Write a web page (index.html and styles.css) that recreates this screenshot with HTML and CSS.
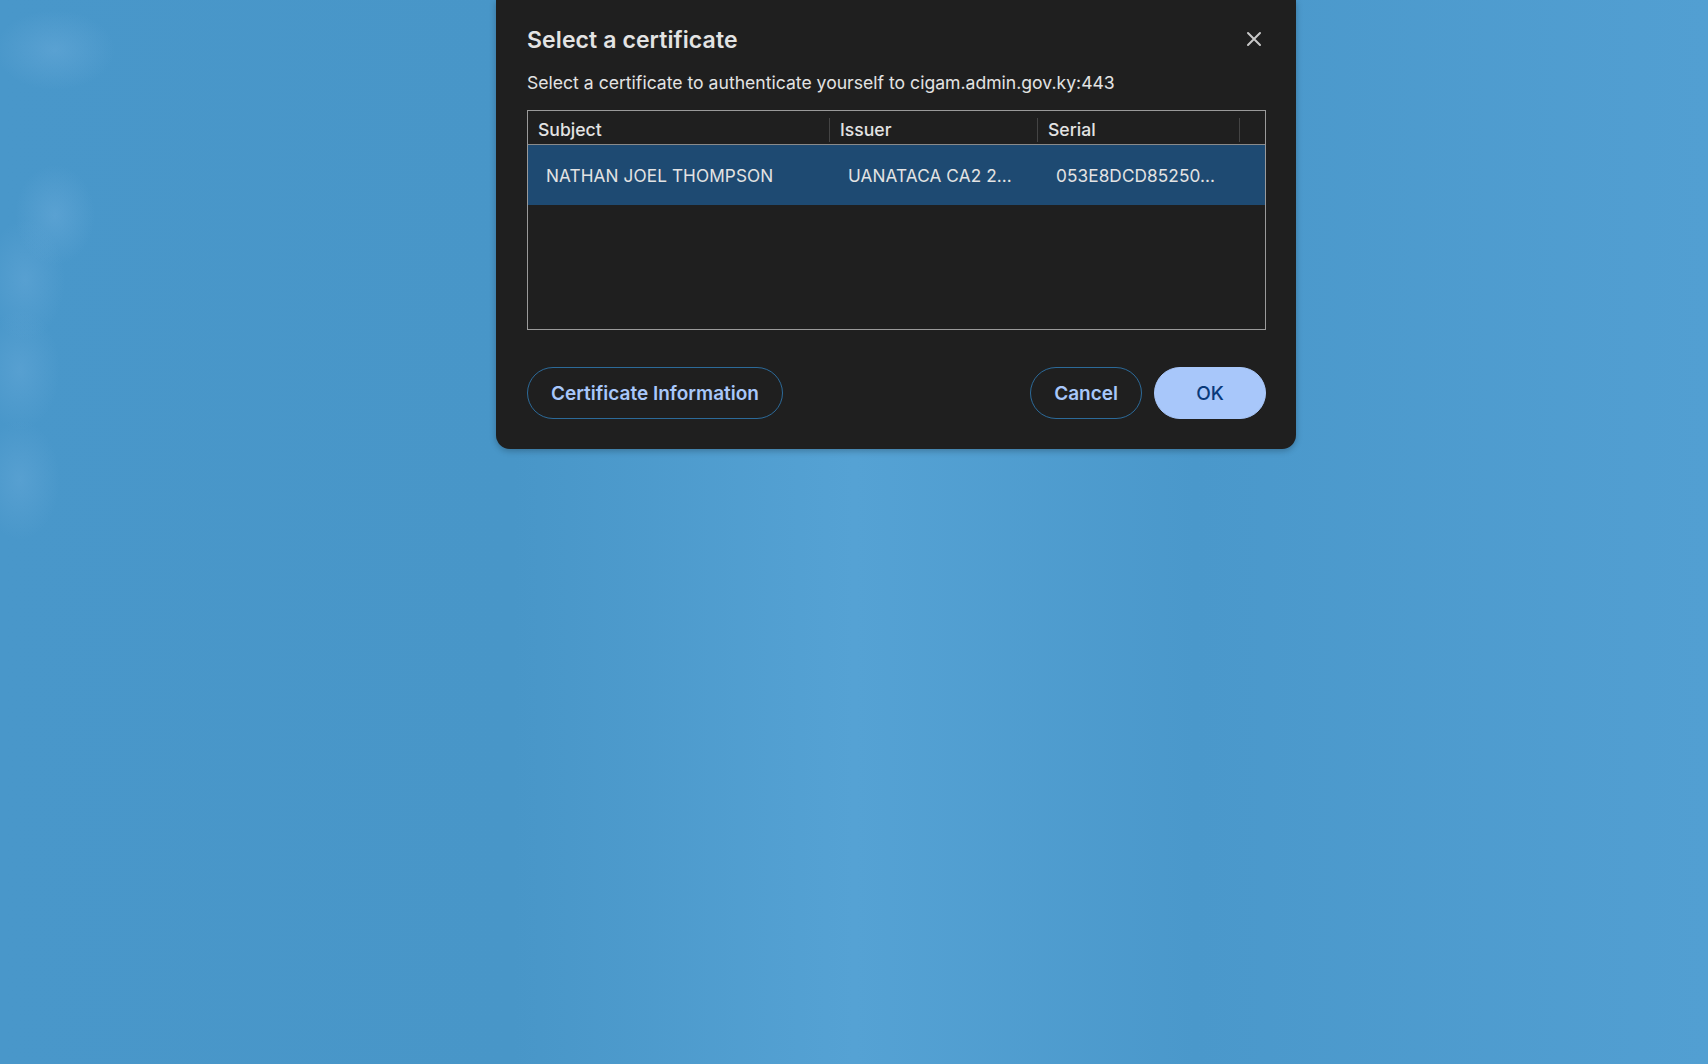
FILE: index.html
```html
<!DOCTYPE html>
<html lang="en">
<head>
	<meta charset="UTF-8">
	<title>Select a certificate</title>
	<link rel="stylesheet" href="styles.css">
</head>
<body>
	<div class="desk">
		<div class="dialog">
			<div class="head">
				<h1>Select a certificate</h1>
				<span class="close">
					<svg width="16" height="16" viewBox="0 0 16 16"><path d="M2 2 L14 14 M14 2 L2 14" stroke="#c8c8c8" stroke-width="2" stroke-linecap="round"/></svg>
				</span>
			</div>
			<p class="sub">Select a certificate to authenticate yourself to cigam.admin.gov.ky:443</p>
			<div class="table">
				<div class="thead">
					<div class="th c1">Subject</div>
					<div class="th c2">Issuer</div>
					<div class="th c3">Serial</div>
					<div class="th c4"></div>
				</div>
				<div class="row sel">
					<div class="td c1">NATHAN JOEL THOMPSON</div>
					<div class="td c2">UANATACA CA2 2...</div>
					<div class="td c3">053E8DCD85250...</div>
				</div>
			</div>
			<div class="actions">
				<button class="btn">Certificate Information</button>
				<div class="right">
					<button class="btn">Cancel</button>
					<button class="btn ok">OK</button>
				</div>
			</div>
		</div>
	</div>
</body>
</html>
```

FILE: styles.css
```css
html, body {
	margin: 0;
	height: 100%;
}
body {
	font-family: Inter, "Liberation Sans", sans-serif;
	background:
		radial-gradient(ellipse 60px 40px at 55px 50px, rgba(120,180,225,0.35), transparent),
		radial-gradient(ellipse 40px 50px at 55px 215px, rgba(120,180,225,0.35), transparent),
		radial-gradient(ellipse 40px 60px at 25px 280px, rgba(120,180,225,0.3), transparent),
		radial-gradient(ellipse 40px 60px at 20px 370px, rgba(120,180,225,0.3), transparent),
		radial-gradient(ellipse 40px 60px at 20px 480px, rgba(120,180,225,0.3), transparent),
		linear-gradient(90deg, #4997ca 0%, #4896c8 30%, #55a2d4 50%, #4a98cb 70%, #529fd2 100%);
	overflow: hidden;
}
.desk {
	padding-left: 496px;
}
.dialog {
	width: 800px;
	box-sizing: border-box;
	height: 449px;
	background: #1f1f1f;
	border-radius: 0 0 14px 14px;
	padding: 23px 30px 0 31px;
	color: #e3e3e3;
	box-shadow: 0 2px 6px rgba(0,0,0,0.25);
}
.head {
	display: flex;
	justify-content: space-between;
	align-items: center;
}
h1 {
	margin: 0;
	font-size: 23px;
	font-weight: 600;
	letter-spacing: 0.1px;
	line-height: 34px;
}
.close {
	display: flex;
	margin-right: 4px;
	margin-top: -2px;
}
.sub {
	margin: 15px 0 0;
	font-size: 17.6px;
	line-height: 22px;
}
.table {
	margin-top: 16px;
	border: 1px solid #9a9a9a;
	height: 220px;
	box-sizing: border-box;
}
.thead {
	display: flex;
	height: 34px;
	border-bottom: 1px solid #8a8a8a;
	align-items: center;
	padding-top: 4px;
	box-sizing: border-box;
}
.th {
	font-size: 17.6px;
	font-weight: 500;
	padding-left: 10px;
	box-sizing: border-box;
	height: 24px;
	line-height: 24px;
	border-right: 1px solid #444;
}
.c1 { width: 302px; }
.c2 { width: 208px; }
.c3 { width: 202px; }
.c4 { flex: 1; border-right: none; }
.row {
	display: flex;
	height: 60px;
	align-items: center;
}
.sel {
	background: #1e4a72;
}
.td {
	font-size: 17.2px;
	padding-left: 18px;
	box-sizing: border-box;
	letter-spacing: 0.1px;
}
.row .c1 { width: 302px; }
.row .c2 { width: 208px; }
.actions {
	display: flex;
	justify-content: space-between;
	margin-top: 37px;
}
.right {
	display: flex;
	gap: 12px;
}
.btn {
	height: 52px;
	border-radius: 26px;
	border: 1.5px solid #2c6a99;
	background: transparent;
	color: #a8c7fa;
	font-family: Inter, "Liberation Sans", sans-serif;
	font-size: 19px;
	font-weight: 600;
	padding: 0 23px;
}
.ok {
	background: #a8c7fa;
	border-color: #a8c7fa;
	color: #0a3a7a;
	width: 112px;
	font-weight: 500;
}
```
